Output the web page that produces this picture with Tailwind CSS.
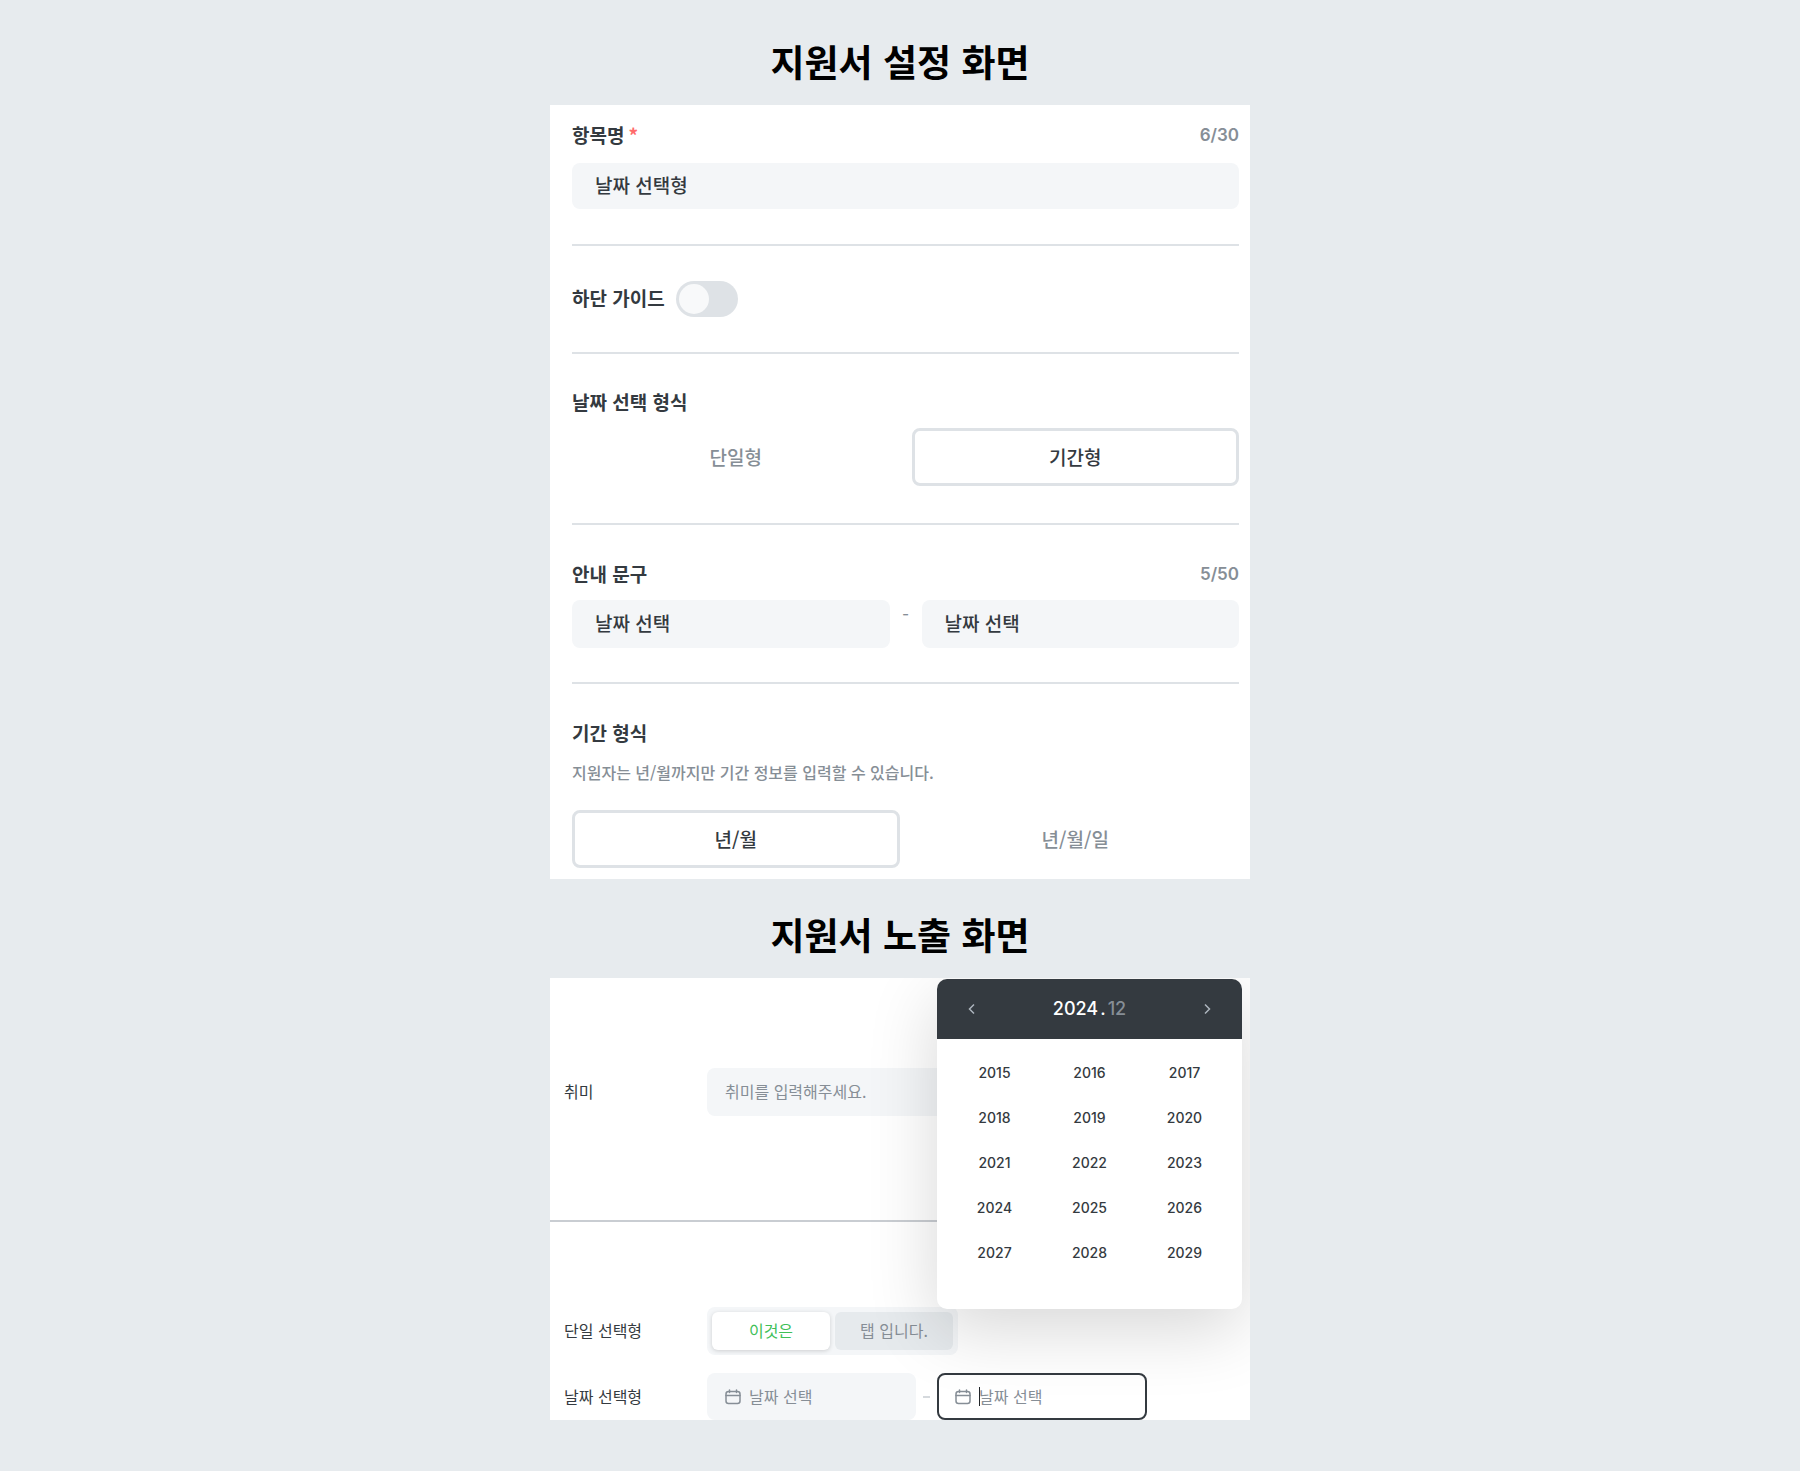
<!DOCTYPE html>
<html lang="ko">
<head>
  <meta charset="UTF-8">
  <meta name="viewport" content="width=device-width, initial-scale=1.0">
  <title>지원서 설정</title>
  <script src="https://cdn.jsdelivr.net/npm/@tailwindcss/browser@4"></script>
</head>
<body class="min-h-screen bg-[#e7ebee] pt-9 pb-10 font-['Noto_Sans_CJK_KR',sans-serif] text-[#343a40]">
  <main class="mx-auto max-w-[700px]">
    <h2 class="mb-[18px] text-center text-[37px] leading-[51px] font-bold text-black">지원서 설정 화면</h2>

    <form class="bg-white pt-4 pr-[11px] pb-[11px] pl-[22px] text-[19px] leading-7">
      <section class="border-b-2 border-[#dee2e6] pb-[35px]">
        <div class="mb-3.5 flex items-center justify-between">
          <label for="item-name" class="font-bold">항목명<span class="ml-1 text-[#ff6b6b]">*</span></label>
          <span class="font-['Inter','Noto_Sans_CJK_KR',sans-serif] text-[17px] font-semibold text-[#868e96]">6/30</span>
        </div>
        <input id="item-name" type="text" value="날짜 선택형" class="block h-[46px] w-full rounded-lg bg-[#f4f6f8] px-[23px] pb-[3px] font-medium" />
      </section>

      <section class="flex items-center gap-[11px] border-b-2 border-[#dee2e6] py-[35px]">
        <label for="guide" class="pb-0.5 font-bold">하단 가이드</label>
        <input id="guide" type="checkbox" class="flex h-9 w-[62px] appearance-none items-center rounded-full bg-[#dee2e6] px-[3px] before:size-[30px] before:rounded-full before:bg-[#f8f9fa] checked:justify-end" />
      </section>

      <fieldset class="border-b-2 border-[#dee2e6] pt-[34px] pb-[37px]">
        <legend class="float-left mb-3 w-full font-bold">날짜 선택 형식</legend>
        <div class="clear-both grid grid-cols-2 gap-3 text-center font-medium leading-[52px]">
          <label class="rounded-lg border-3 border-transparent text-[#868e96] has-checked:border-[#dee2e6] has-checked:text-[#343a40]"><input type="radio" name="date-type" class="sr-only" />단일형</label>
          <label class="rounded-lg border-3 border-transparent text-[#868e96] has-checked:border-[#dee2e6] has-checked:text-[#343a40]"><input type="radio" name="date-type" class="sr-only" checked />기간형</label>
        </div>
      </fieldset>

      <section class="border-b-2 border-[#dee2e6] pt-[35px] pb-[34px]">
        <div class="mb-3 flex items-center justify-between">
          <label for="guide-start" class="font-bold">안내 문구</label>
          <span class="font-['Inter','Noto_Sans_CJK_KR',sans-serif] text-[17px] font-semibold text-[#868e96]">5/50</span>
        </div>
        <div class="flex">
          <input id="guide-start" type="text" value="날짜 선택" class="h-12 w-0 flex-1 rounded-lg bg-[#f4f6f8] px-[23px] pb-[3px] font-medium" />
          <span class="w-8 text-center text-[#868e96]">-</span>
          <input type="text" value="날짜 선택" aria-label="종료일 안내 문구" class="h-12 w-0 flex-1 rounded-lg bg-[#f4f6f8] px-[23px] pb-[3px] font-medium" />
        </div>
      </section>

      <fieldset class="pt-[35px]">
        <legend class="float-left mb-[11px] w-full font-bold">기간 형식</legend>
        <p class="clear-both mb-6 text-base leading-7 font-medium text-[#868e96]">지원자는 년/월까지만 기간 정보를 입력할 수 있습니다.</p>
        <div class="grid grid-cols-2 gap-3 text-center font-medium leading-[52px]">
          <label class="rounded-lg border-3 border-transparent text-[#868e96] has-checked:border-[#dee2e6] has-checked:text-[#343a40]"><input type="radio" name="period-type" class="sr-only" checked />년/월</label>
          <label class="rounded-lg border-3 border-transparent text-[#868e96] has-checked:border-[#dee2e6] has-checked:text-[#343a40]"><input type="radio" name="period-type" class="sr-only" />년/월/일</label>
        </div>
      </fieldset>
    </form>

    <h2 class="mt-[30px] mb-[18px] text-center text-[37px] leading-[51px] font-bold text-black">지원서 노출 화면</h2>

    <form class="relative overflow-hidden bg-white text-base leading-6">
      <div class="mr-10 flex items-center border-b-2 border-[#c9cdd2] pt-[90px] pb-[104px] pl-[14px]">
        <label for="hobby" class="w-[143px] pb-0.5">취미</label>
        <input id="hobby" type="text" placeholder="취미를 입력해주세요." class="h-12 flex-1 rounded-lg bg-[#f4f6f8] px-[18px] pb-0.5 placeholder:text-[#868e96]" />
      </div>

      <div class="flex items-center pt-[85px] pl-[14px]">
        <span class="w-[143px] pb-0.5">단일 선택형</span>
        <div class="flex gap-[5px] rounded-lg bg-[#f4f6f8] p-[5px] text-center">
          <button type="button" class="h-[38px] w-[118px] rounded-md bg-white pb-0.5 text-[#40c057] shadow-[0_1px_4px_rgba(0,0,0,0.16)]">이것은</button>
          <button type="button" class="h-[38px] w-[118px] rounded-md bg-[#e6eaed] pb-0.5 text-[#868e96]">탭 입니다.</button>
        </div>
      </div>

      <div class="flex items-center pt-[18px] pl-[14px]">
        <label for="date-start" class="w-[143px] pb-0.5">날짜 선택형</label>
        <div class="flex h-[47px] w-[209px] items-center gap-2 rounded-lg bg-[#f4f6f8] px-[18px]">
          <svg class="size-4 shrink-0 text-[#868e96]" viewBox="0 0 16 16" fill="none" stroke="currentColor" stroke-width="1.5" stroke-linecap="round">
            <rect x="1" y="2.5" width="14" height="12" rx="2.5" />
            <path d="M1 6.5h14M4.5 1v2.5M11.5 1v2.5" />
          </svg>
          <input id="date-start" type="text" placeholder="날짜 선택" class="w-0 flex-1 pb-0.5 placeholder:text-[#868e96]" />
        </div>
        <span class="mx-[7px] h-0.5 w-[7px] bg-[#d5d9dd]"></span>
        <div class="relative flex h-[47px] w-[210px] items-center gap-2 rounded-lg border-2 border-[#343a40] bg-white/60 px-4">
          <svg class="size-4 shrink-0 text-[#868e96]" viewBox="0 0 16 16" fill="none" stroke="currentColor" stroke-width="1.5" stroke-linecap="round">
            <rect x="1" y="2.5" width="14" height="12" rx="2.5" />
            <path d="M1 6.5h14M4.5 1v2.5M11.5 1v2.5" />
          </svg>
          <input type="text" placeholder="날짜 선택" aria-label="종료일" class="w-0 flex-1 pb-0.5 placeholder:text-[#868e96]" />
          <span class="absolute top-3 left-10 h-[19px] w-px bg-[#212529]"></span>
        </div>
      </div>

      <!-- year picker -->
      <div class="absolute top-px right-2 w-[305px] rounded-[10px] bg-white pb-[34px] font-['Inter',sans-serif] shadow-[0_20px_70px_rgba(0,0,0,0.16)]">
        <div class="flex h-[60px] items-center justify-between rounded-t-[10px] bg-[#343a40] px-[27px] text-[#adb5bd]">
          <button type="button" aria-label="이전">
            <svg class="size-4" viewBox="0 0 16 16" fill="none" stroke="currentColor" stroke-width="1.5"><path d="M10 3.5L5.5 8l4.5 4.5" /></svg>
          </button>
          <div class="text-lg font-medium text-white">2024<span class="mx-0.5">.</span><span class="text-[#868e96]">12</span></div>
          <button type="button" aria-label="다음">
            <svg class="size-4" viewBox="0 0 16 16" fill="none" stroke="currentColor" stroke-width="1.5"><path d="M6 3.5L10.500 8 6 12.500" /></svg>
          </button>
        </div>
        <div class="grid auto-rows-[45px] grid-cols-3 px-[10px] pt-[11px] text-sm font-medium">
          <button type="button">2015</button>
          <button type="button">2016</button>
          <button type="button">2017</button>
          <button type="button">2018</button>
          <button type="button">2019</button>
          <button type="button">2020</button>
          <button type="button">2021</button>
          <button type="button">2022</button>
          <button type="button">2023</button>
          <button type="button">2024</button>
          <button type="button">2025</button>
          <button type="button">2026</button>
          <button type="button">2027</button>
          <button type="button">2028</button>
          <button type="button">2029</button>
        </div>
      </div>
    </form>
  </main>
</body>
</html>
